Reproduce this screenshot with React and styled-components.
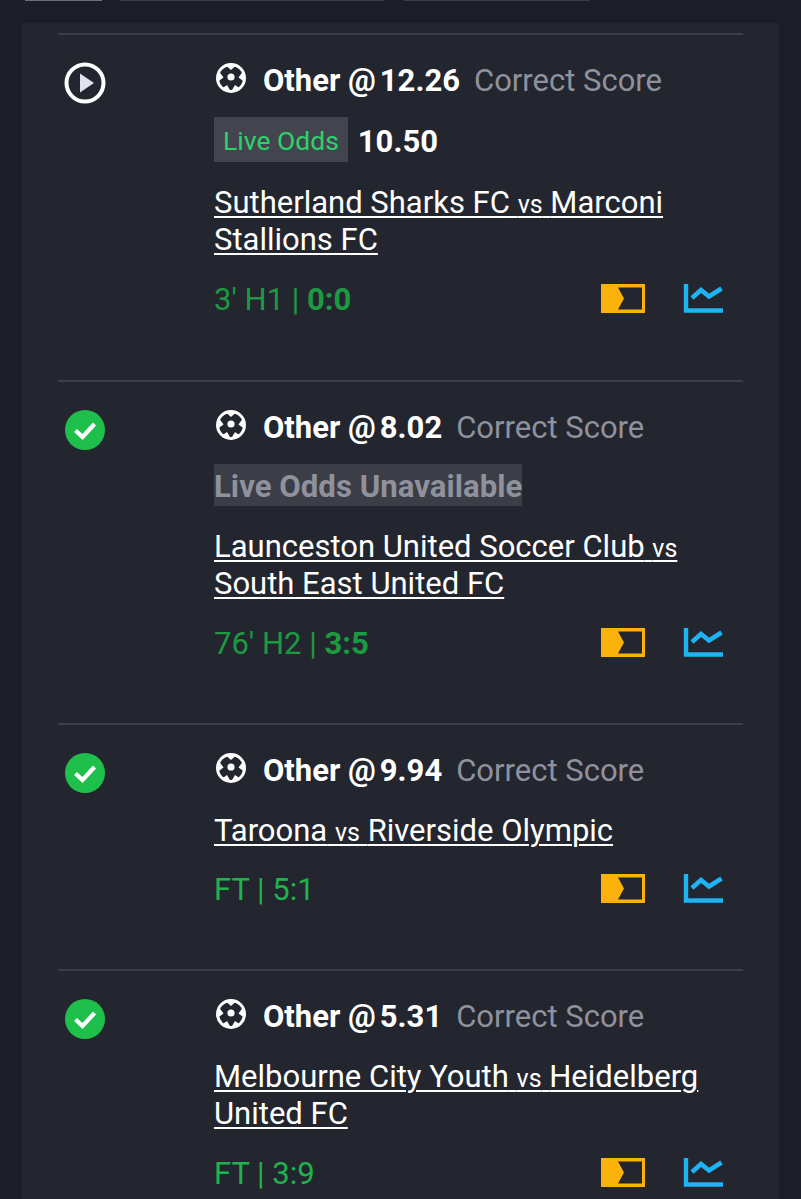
import React from 'react';
import styled, { createGlobalStyle } from 'styled-components';

const Global = createGlobalStyle`
  html, body { margin: 0; padding: 0; background: #1b1e26; font-family: Roboto, "Liberation Sans", sans-serif; }
  body { height: 1199px; overflow: hidden; }
`;
const Page = styled.div`height: 1199px; overflow: hidden; background: #1b1e26; display: flex; flex-direction: column;`;
const Tabs = styled.div`display: flex; height: 2px; padding-left: 25px; flex: none;`;
const Tab = styled.div`
  width: ${p => p.$w}px; margin-right: ${p => p.$gap}px; height: 1px;
  background: ${p => p.$active ? '#6d7078' : '#3a3d45'};
`;
const Card = styled.div`margin: 21px 22px 0 22px; padding: 10px 36px 0; background: #23262f; flex: 1;`;
const Row = styled.div`
  display: flex; border-top: 2px solid #3c3f47; height: ${p => p.$h}px; box-sizing: border-box; padding-top: 27px;
`;
const StatusCol = styled.div`width: 156px; flex: none; padding-left: 6px; box-sizing: border-box;`;
const Body = styled.div`flex: 1; min-width: 0; padding-right: 20px;`;
const TitleRow = styled.div`display: flex; align-items: center; height: 36px; color: #fff;`;
const Ball = styled.svg`width: 32px; height: 32px; flex: none; margin: -4px 16px 0 1px;`;
const Pick = styled.span`font-size: 31px; font-weight: 700; white-space: nowrap;`;
const PickOdds = styled.span`margin-left: 4px;`;
const Market = styled.span`font-size: 31px; color: #8f929d; margin-left: 14px; white-space: nowrap;`;
const OddsRow = styled.div`display: flex; align-items: center; margin-top: 19px;`;
const Chip = styled.span`
  display: flex; align-items: center; box-sizing: border-box; height: ${p => p.$muted ? 42 : 45}px; padding-top: 2px;
  font-size: ${p => p.$muted ? 31.2 : 26.5}px; color: ${p => p.$muted ? '#8f929d' : '#2fd26a'};
  font-weight: ${p => p.$muted ? 700 : 400};
  background: ${p => p.$muted ? '#3b3e46' : '#42454d'}; white-space: nowrap; padding-inline: ${p => p.$muted ? 0 : 9}px;
`;
const Price = styled.span`font-size: 31px; font-weight: 700; color: #fff; margin-left: 10px; padding-top: 3px;`;
const Match = styled.div`
  margin-top: ${p => p.$mt}px; font-size: 31px; line-height: 36.5px; color: #fff;
  text-decoration: underline; text-decoration-thickness: 2px; text-underline-offset: 3px;
`;
const Vs = styled.span`font-size: 25px; line-height: 0;`;
const Foot = styled.div`display: flex; align-items: center; justify-content: space-between; margin-top: ${p => p.$mt}px; height: 36px;`;
const Time = styled.span`font-size: 31px; padding-top: 2px; color: ${p => p.$bright ? '#20b24c' : '#1c9a41'};`;
const Score = styled.b`font-weight: 700;`;
const Icons = styled.div`display: flex; align-items: center; gap: 38px;`;

const Play = () => (
  <svg width="42" height="42" viewBox="0 0 42 42">
    <circle cx="21" cy="21" r="18.5" fill="none" stroke="#fff" strokeWidth="4" />
    <path d="M16 11.5 L30 21 L16 30.5 Z" fill="#dfe3ee" />
  </svg>
);
const Check = () => (
  <svg width="42" height="42" viewBox="0 0 42 42">
    <circle cx="21" cy="21" r="20" fill="#1fbf4b" />
    <path d="M11.5 21.5 L18.5 28 L30.5 15" fill="none" stroke="#fff" strokeWidth="4.2" />
  </svg>
);
const SoccerBall = () => (
  <Ball viewBox="0 0 32 32">
    <circle cx="16" cy="16" r="15" fill="#fff" />
    <circle cx="16" cy="16" r="12" fill="#23262f" />
    <path d="M11 3.5 H21 L16 8 Z" fill="#fff" />
    <path d="M27.5 10 L29 19.5 L23.5 15.5 Z" fill="#fff" />
    <path d="M25 26.5 L16.5 29 L20 23 Z" fill="#fff" />
    <path d="M7 26.5 L15.5 29 L12 23 Z" fill="#fff" />
    <path d="M4.5 10 L3 19.5 L8.5 15.5 Z" fill="#fff" />
    <circle cx="16" cy="15" r="3.6" fill="#fff" />
  </Ball>
);
const Tag = () => (
  <svg width="44" height="29" viewBox="0 0 44 29">
    <rect width="44" height="29" fill="#fdb10b" />
    <path d="M17 3.5 H41 V25.5 H17 L23 14.5 Z" fill="#23262f" />
  </svg>
);
const Chart = () => (
  <svg width="40" height="29" viewBox="0 0 40 29">
    <path d="M3 0 V26.5 H40" fill="none" stroke="#1eb3f2" strokeWidth="4.4" />
    <path d="M9 14 L18 6 L26 12.5 L38.5 4.5" fill="none" stroke="#1eb3f2" strokeWidth="4.6" />
  </svg>
);

const bets = [
  { h: 347, live: true, odds: '12.26', price: '10.50', lines: ['Sutherland Sharks FC', 'Marconi', 'Stallions FC'], time: "3' H1 | ", score: '0:0', footMt: 22 },
  { h: 343, done: true, muted: true, odds: '8.02', lines: ['Launceston United Soccer Club', '', 'South East United FC'], time: "76' H2 | ", score: '3:5', footMt: 22 },
  { h: 246, done: true, bright: true, odds: '9.94', lines: ['Taroona', 'Riverside Olympic'], time: 'FT | 5:1', footMt: 21 },
  { h: 260, done: true, bright: true, odds: '5.31', lines: ['Melbourne City Youth', 'Heidelberg', 'United FC'], time: 'FT | 3:9', footMt: 22 },
];

export default function App() {
  return (
    <Page>
      <Global />
      <Tabs>
        <Tab $w={77} $gap={18} $active />
        <Tab $w={264} $gap={20} />
        <Tab $w={186} $gap={0} />
      </Tabs>
      <Card>
        {bets.map(b => (
          <Row key={b.odds} $h={b.h}>
            <StatusCol>{b.live ? <Play /> : <Check />}</StatusCol>
            <Body>
              <TitleRow>
                <SoccerBall />
                <Pick>Other @<PickOdds>{b.odds}</PickOdds></Pick>
                <Market>Correct Score</Market>
              </TitleRow>
              {b.price && (
                <OddsRow><Chip>Live Odds</Chip><Price>{b.price}</Price></OddsRow>
              )}
              {b.muted && (
                <OddsRow><Chip $muted>Live Odds Unavailable</Chip></OddsRow>
              )}
              <Match $mt={b.price || b.muted ? 23 : 25}>
                {b.lines[0]} <Vs>vs</Vs> {b.lines[1]} {b.lines[2]}
              </Match>
              <Foot $mt={b.footMt}>
                <Time $bright={b.bright}>{b.time}{b.score && <Score>{b.score}</Score>}</Time>
                <Icons><Tag /><Chart /></Icons>
              </Foot>
            </Body>
          </Row>
        ))}
      </Card>
    </Page>
  );
}
